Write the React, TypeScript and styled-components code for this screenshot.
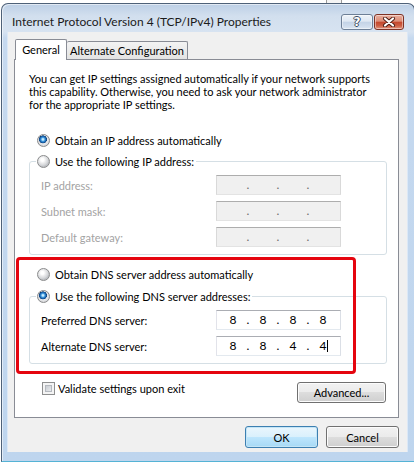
import React from "react";
import styled, { createGlobalStyle } from "styled-components";

const FONT = `Lato, "Noto Sans", "Segoe UI", Arial, sans-serif`;
const BODY_SIZE = "11px";

const Global = createGlobalStyle`
  html, body { margin: 0; padding: 0; background: #ffffff; overflow: hidden; }
  body { font-family: ${FONT}; }
  * { box-sizing: border-box; }
`;

const Screen = styled.div`
  width: 414px;
  height: 462px;
  overflow: hidden;
  background: #ffffff;
  display: flex;
  flex-direction: column;
`;

const Backdrop = styled.div`
  height: 3px;
  display: flex;
  padding-left: 326px;
`;

const BackdropEdge = styled.div`
  width: 16px;
  height: 3px;
  border-left: 1px solid #9a9a9a;
  border-right: 1px solid #9a9a9a;
  background: #f4f4f4;
`;

const Window = styled.div`
  margin-left: 1px;
  width: 414px;
  height: 459px;
  border: 1px solid #4e6178;
  border-bottom-color: #55b3d5;
  border-radius: 7px 7px 0 0;
  background: linear-gradient(#bccfe6 0px, #d2dfee 12px, #d7e3f1 28px, #c6d9ef 34px, #bed5ee 100%);
  box-shadow: inset 1px 1px 0 rgba(255, 255, 255, 0.55);
  display: flex;
  flex-direction: column;
`;

const TitleBar = styled.div`
  height: 28px;
  flex: none;
  display: flex;
  align-items: center;
  padding: 7px 10px 0 10px;
`;

const Title = styled.div`
  flex: 1;
  font-size: 12px;
  color: #1b1b1b;
  white-space: nowrap;
`;

const CaptionButton = styled.div<{ $kind: "help" | "close" }>`
  width: ${(p) => (p.$kind === "help" ? 32 : 30)}px;
  height: 16px;
  margin-left: ${(p) => (p.$kind === "close" ? 1 : 0)}px;
  border-radius: 3px;
  border: 1px solid ${(p) => (p.$kind === "help" ? "#6d7f96" : "#7e3225")};
  background: ${(p) =>
    p.$kind === "help"
      ? "linear-gradient(#eef3f9 0%, #dfe8f3 45%, #c3d3e6 50%, #cfdcec 80%, #dce7f3 100%)"
      : "linear-gradient(#e9ae9f 0%, #dc8d77 45%, #c4462c 50%, #cc5d42 75%, #e1957f 100%)"};
  box-shadow: inset 0 0 0 1px rgba(255, 255, 255, 0.45);
  display: flex;
  align-items: center;
  justify-content: center;
`;

const HelpGlyph = styled.span`
  font-family: "DejaVu Sans", sans-serif;
  font-weight: bold;
  font-size: 12px;
  line-height: 12px;
  color: #ffffff;
  text-shadow: 1px 0 0 #3d4c60, -1px 0 0 #3d4c60, 0 1px 0 #3d4c60, 0 -1px 0 #3d4c60;
`;

const Client = styled.div`
  margin: 0 7px 0 6px;
  height: 420px;
  flex: none;
  background: #f0f0f0;
  box-shadow: -1px 0 0 #dce8f6, 1px 0 0 #dce8f6;
  display: flex;
  flex-direction: column;
`;

const TabRow = styled.div`
  display: flex;
  align-items: flex-start;
  height: 28px;
  padding: 7px 0 0 7px;
  margin-bottom: -1px;
  position: relative;
  z-index: 1;
`;

const Tab = styled.div<{ $active?: boolean; $w: number }>`
  width: ${(p) => p.$w}px;
  height: ${(p) => (p.$active ? 21 : 18)}px;
  margin-top: ${(p) => (p.$active ? 0 : 2)}px;
  border: 1px solid #898c95;
  border-bottom: none;
  border-left: ${(p) => (p.$active ? "1px solid #898c95" : "none")};
  border-radius: 2px 2px 0 0;
  background: ${(p) => (p.$active ? "#ffffff" : "linear-gradient(#f3f3f3, #e3e3e3)")};
  display: flex;
  align-items: center;
  justify-content: center;
  padding-bottom: ${(p) => (p.$active ? 1 : 0)}px;
  font-size: ${BODY_SIZE};
  color: #000;
  white-space: nowrap;
`;

const Panel = styled.div`
  margin-left: 6px;
  width: 385px;
  height: 359px;
  flex: none;
  border: 1px solid #898c95;
  background: #ffffff;
  display: flex;
  flex-direction: column;
  position: relative;
`;

const Intro = styled.p`
  margin: 12px 0 0 14px;
  font-size: ${BODY_SIZE};
  line-height: 13px;
  color: #000;
  white-space: nowrap;
`;

const RadioRow = styled.div<{ $mt: number }>`
  display: flex;
  align-items: center;
  gap: 5px;
  height: 16px;
  margin: ${(p) => p.$mt}px 0 0 22px;
  font-size: ${BODY_SIZE};
  color: #000;
  white-space: nowrap;
`;

const Radio = styled.span<{ $checked?: boolean }>`
  flex: none;
  width: 13px;
  height: 13px;
  border-radius: 50%;
  border: 1px solid #8a8b8c;
  background: ${(p) =>
    p.$checked
      ? "radial-gradient(circle at 45% 40%, #c6ecff 0 0.8px, #3b95dc 2px, #14589f 3.3px, #0d3f78 3.8px, transparent 4.2px), radial-gradient(circle at 50% 45%, #f7f7f7 0 2px, #dcdde0 5.5px, #c3c5c9 6.5px)"
      : "radial-gradient(circle at 40% 35%, #ffffff 0 1.5px, #eeeeef 3px, #d3d5d8 5.5px, #c0c2c6 6.5px)"};
`;

const GroupBox = styled.fieldset<{ $mt: number }>`
  margin: ${(p) => p.$mt}px 11px 0 14px;
  border: 1px solid #d5dfe5;
  border-radius: 3px;
  padding: 6px 0 7px 0;
  min-width: 0;
  display: flex;
  flex-direction: column;
  gap: 6px;
`;

const Legend = styled.legend`
  margin-left: 6px;
  padding: 0 2px 0 1px;
  height: 16px;
  display: flex;
  align-items: center;
  gap: 5px;
  font-size: ${BODY_SIZE};
  color: #000;
  white-space: nowrap;
`;

const FieldRow = styled.div`
  display: flex;
  align-items: center;
  height: 20px;
  padding-left: 11px;
`;

const FieldLabel = styled.span<{ $disabled?: boolean }>`
  width: 175px;
  font-size: ${BODY_SIZE};
  color: ${(p) => (p.$disabled ? "#a3a3a3" : "#000")};
  white-space: nowrap;
`;

const IpBox = styled.div<{ $disabled?: boolean }>`
  width: 125px;
  height: 20px;
  display: flex;
  align-items: center;
  padding-left: 3px;
  border: 1px solid;
  border-color: ${(p) =>
    p.$disabled ? "#adadad #d9d9d9 #e3e3e3 #d9d9d9" : "#abadb3 #dbdfe6 #e3e9ef #e2e3ea"};
  background: ${(p) => (p.$disabled ? "#f0f0f0" : "#ffffff")};
  font-size: 12px;
  color: ${(p) => (p.$disabled ? "#6d6d6d" : "#000")};
`;

const Octet = styled.span<{ $caret?: boolean }>`
  width: 26px;
  flex: none;
  text-align: center;
  position: relative;
  line-height: 16px;
  &::after {
    content: "";
    display: ${(p) => (p.$caret ? "block" : "none")};
    position: absolute;
    left: 17px;
    top: 2px;
    width: 1px;
    height: 12px;
    background: #000;
  }
`;

const Dot = styled.span`
  width: 4px;
  flex: none;
  text-align: center;
  line-height: 16px;
`;

const BottomRow = styled.div`
  display: flex;
  align-items: flex-start;
  justify-content: space-between;
  margin: 18px 12px 0 27px;
`;

const CheckRow = styled.div`
  display: flex;
  align-items: center;
  gap: 3px;
  height: 13px;
  font-size: ${BODY_SIZE};
  color: #000;
  white-space: nowrap;
`;

const Check = styled.span`
  flex: none;
  width: 13px;
  height: 13px;
  border: 1px solid #8e8f8f;
  padding: 2px;
  background: linear-gradient(135deg, #c3c7cd, #eef0f2) content-box, #f4f4f4;
  box-shadow: inset 0 0 0 2px #f4f4f4, inset 0 0 0 3px #b5b9bf;
`;

const PushButton = styled.div<{ $w: number; $h: number; $default?: boolean }>`
  width: ${(p) => p.$w}px;
  height: ${(p) => p.$h}px;
  border-radius: 3px;
  border: 1px solid ${(p) => (p.$default ? "#3c7fb1" : "#707070")};
  background: ${(p) =>
    p.$default
      ? "linear-gradient(#eaf6fd 0%, #d9f0fc 50%, #bee6fd 50%, #a7d9f5 100%)"
      : "linear-gradient(#f2f2f2 0%, #ebebeb 50%, #dddddd 50%, #cfcfcf 100%)"};
  box-shadow: inset 0 0 0 1px ${(p) => (p.$default ? "#c4e5f6" : "#fcfcfc")};
  display: flex;
  align-items: center;
  justify-content: center;
  font-size: ${BODY_SIZE};
  color: #000;
  white-space: nowrap;
`;

const ButtonRow = styled.div`
  display: flex;
  justify-content: flex-end;
  gap: 8px;
  margin-top: 8px;
  padding-right: 8px;
`;

const Annotation = styled.div`
  position: absolute;
  left: 1px;
  top: 197px;
  width: 340px;
  height: 117px;
  border: 3px solid #e5050f;
  border-radius: 4px;
  pointer-events: none;
`;

const IpField: React.FC<{ values?: string[]; disabled?: boolean; caret?: boolean }> = ({
  values = ["", "", "", ""],
  disabled,
  caret,
}) => (
  <IpBox $disabled={disabled}>
    {values.map((v, i) => (
      <React.Fragment key={i}>
        <Octet $caret={caret && i === 3}>{v}</Octet>
        {i < 3 && <Dot>.</Dot>}
      </React.Fragment>
    ))}
  </IpBox>
);

const CloseIcon = () => (
  <svg width="14" height="10" viewBox="0 0 14 10">
    <path d="M3 1.5 L11 8.5 M11 1.5 L3 8.5" stroke="#4a1a12" strokeWidth="4" strokeLinecap="round" />
    <path d="M3 1.5 L11 8.5 M11 1.5 L3 8.5" stroke="#ffffff" strokeWidth="2.2" strokeLinecap="round" />
  </svg>
);

export default function App() {
  return (
    <Screen>
      <Global />
      <Backdrop>
        <BackdropEdge />
      </Backdrop>
      <Window>
        <TitleBar>
          <Title>Internet Protocol Version 4 (TCP/IPv4) Properties</Title>
          <CaptionButton $kind="help">
            <HelpGlyph>?</HelpGlyph>
          </CaptionButton>
          <CaptionButton $kind="close">
            <CloseIcon />
          </CaptionButton>
        </TitleBar>
        <Client>
          <TabRow>
            <Tab $active $w={52}>General</Tab>
            <Tab $w={121}>Alternate Configuration</Tab>
          </TabRow>
          <Panel>
            <Intro>
              You can get IP settings assigned automatically if your network supports
              <br />
              this capability. Otherwise, you need to ask your network administrator
              <br />
              for the appropriate IP settings.
            </Intro>
            <RadioRow $mt={21}>
              <Radio $checked />
              Obtain an IP address automatically
            </RadioRow>
            <GroupBox $mt={5}>
              <Legend>
                <Radio />
                Use the following IP address:
              </Legend>
              <FieldRow>
                <FieldLabel $disabled>IP address:</FieldLabel>
                <IpField disabled />
              </FieldRow>
              <FieldRow>
                <FieldLabel $disabled>Subnet mask:</FieldLabel>
                <IpField disabled />
              </FieldRow>
              <FieldRow>
                <FieldLabel $disabled>Default gateway:</FieldLabel>
                <IpField disabled />
              </FieldRow>
            </GroupBox>
            <RadioRow $mt={11}>
              <Radio />
              Obtain DNS server address automatically
            </RadioRow>
            <GroupBox $mt={6}>
              <Legend>
                <Radio $checked />
                Use the following DNS server addresses:
              </Legend>
              <FieldRow>
                <FieldLabel>Preferred DNS server:</FieldLabel>
                <IpField values={["8", "8", "8", "8"]} />
              </FieldRow>
              <FieldRow>
                <FieldLabel>Alternate DNS server:</FieldLabel>
                <IpField values={["8", "8", "4", "4"]} caret />
              </FieldRow>
            </GroupBox>
            <BottomRow>
              <CheckRow>
                <Check />
                Validate settings upon exit
              </CheckRow>
              <PushButton $w={89} $h={21}>Advanced...</PushButton>
            </BottomRow>
            <Annotation />
          </Panel>
          <ButtonRow>
            <PushButton $w={73} $h={22} $default>OK</PushButton>
            <PushButton $w={73} $h={22}>Cancel</PushButton>
          </ButtonRow>
        </Client>
      </Window>
    </Screen>
  );
}
